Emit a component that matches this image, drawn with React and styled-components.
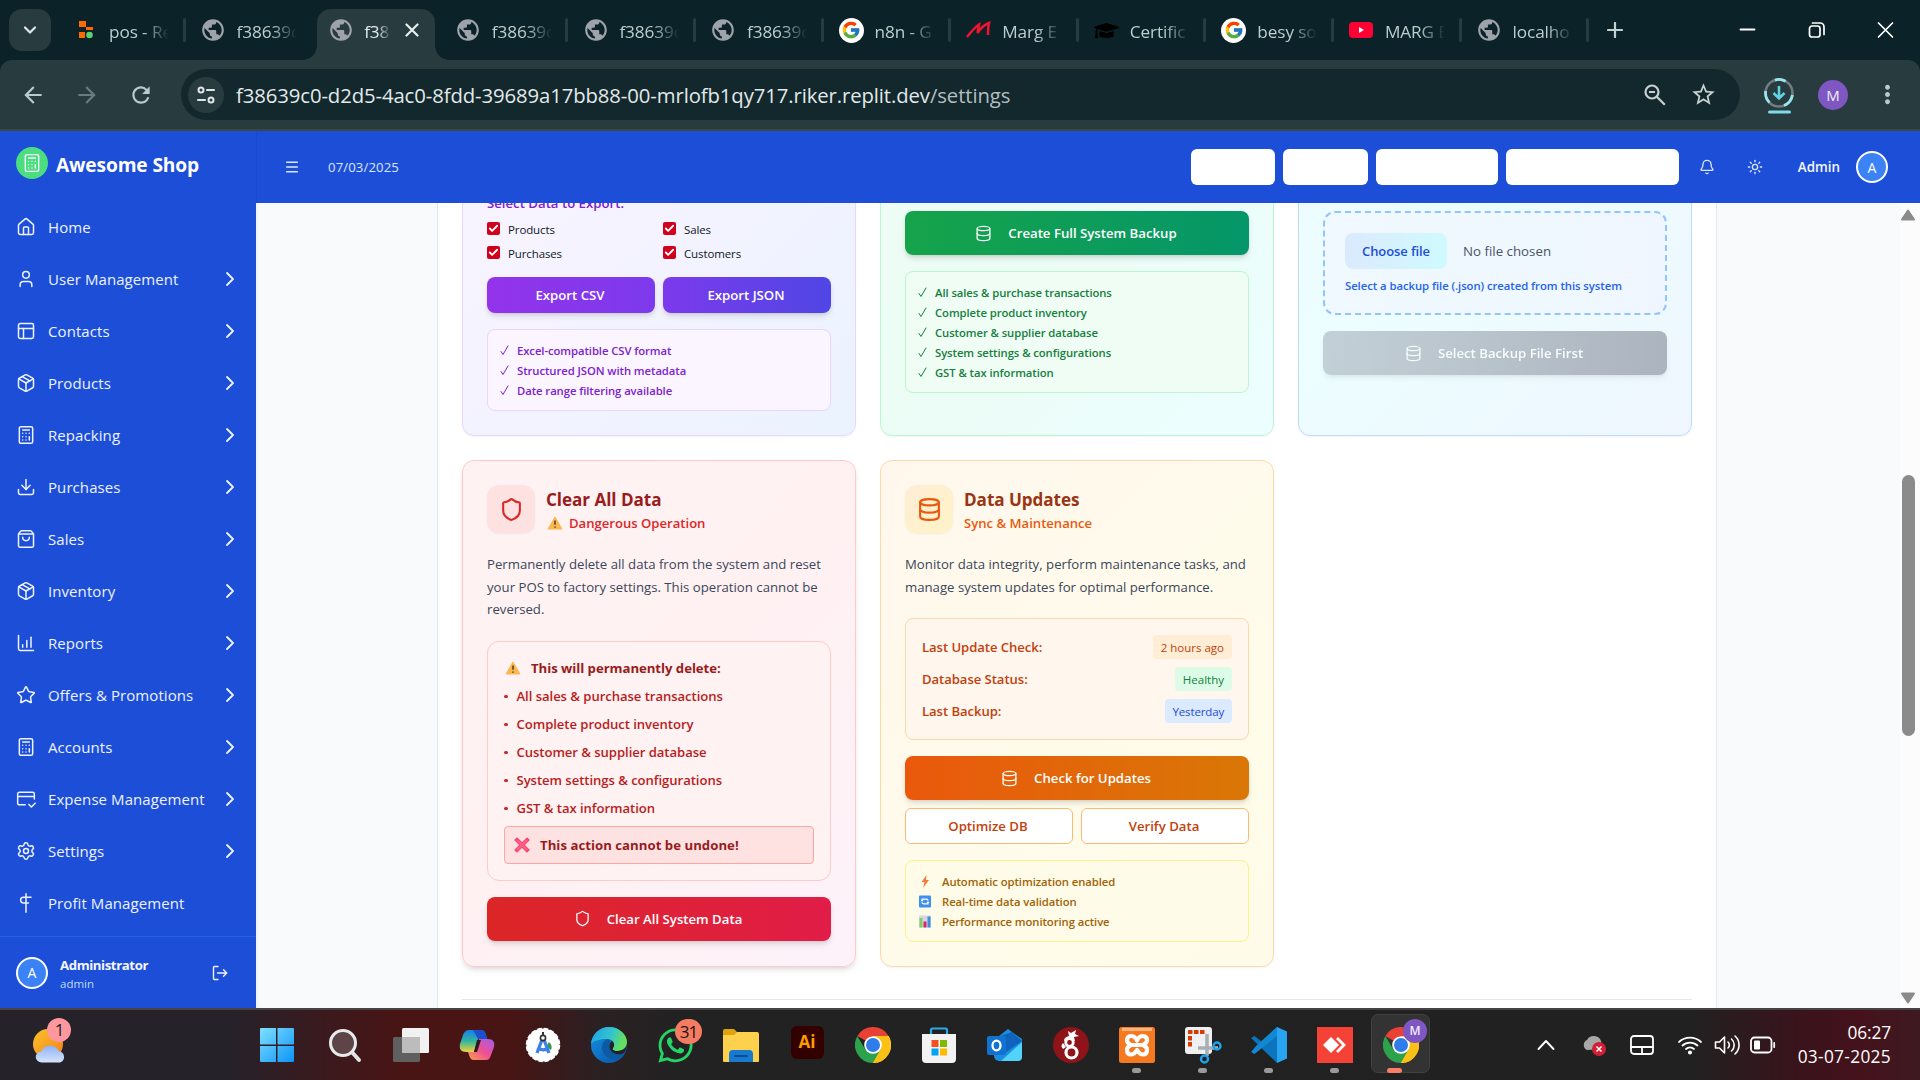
import React from "react";
import styled, { createGlobalStyle, css } from "styled-components";
import {
  House, User, PanelsTopLeft, Package, Calculator, Download, ShoppingBag,
  ChartColumnIncreasing, Star, Settings, ChevronRight, Bell, Sun, Menu,
  Shield, Database, Check,
} from "lucide-react";
import { FcGoogle } from "react-icons/fc";
import { FaGraduationCap, FaWhatsapp } from "react-icons/fa";
import { MdPublic, MdArrowBack, MdArrowForward, MdRefresh, MdStarBorder, MdMoreVert } from "react-icons/md";

const Global = createGlobalStyle`
  *, *::before, *::after { box-sizing: border-box; }
  body { margin: 0; background: #0b2328; }
  body, button { font-family: "Open Sans", "Noto Sans", sans-serif; }
  svg { display: block; flex: none; }
`;

const Screen = styled.div`
  width: 1920px; height: 1080px; overflow: hidden;
  display: flex; flex-direction: column;
`;

/* ---------- browser chrome ---------- */
const TabStrip = styled.div`
  height: 60px; flex: none; background: #0b2328;
  display: flex; align-items: center; padding-left: 9px;
`;
const TabSearch = styled.div`
  width: 42px; height: 42px; border-radius: 13px; background: #283c40; color: #dfe7e8;
  display: flex; align-items: center; justify-content: center; margin-right: 6px;
`;
const Tab = styled.div`
  width: 127.6px; height: 51px; align-self: flex-end; flex: none; position: relative;
  display: flex; align-items: center; padding: 0 0 9px 17.5px; gap: 12.5px;
  ${(p) => p.$sep && css`
    &::after { content: ""; position: absolute; right: -1px; top: 9px; width: 3px; height: 24px; border-radius: 2px; background: #283c40; }
  `}
  ${(p) => p.$active && css`
    width: 118px; margin: 0 4.6px 0 5px; padding-left: 12.5px; background: #283c40; border-radius: 14px 14px 0 0;
    &::before, &::after { content: ""; position: absolute; bottom: 0; width: 14px; height: 14px; }
    &::before { left: -14px; background: radial-gradient(circle at 0 0, transparent 13.5px, #283c40 14px); }
    &::after { right: -14px; background: radial-gradient(circle at 100% 0, transparent 13.5px, #283c40 14px); }
  `}
`;
const TabIcon = styled.div`
  width: 22px; height: 26px; flex: none; display: flex; align-items: center; justify-content: center;
`;
const TabText = styled.div`
  width: ${(p) => p.$w || 68}px; flex: none; overflow: hidden; white-space: nowrap;
  font-size: 17.2px; line-height: 26px; color: ${(p) => (p.$w ? "#e3ebec" : "#bccdcf")};
  letter-spacing: -0.1px; padding-top: 3px;
  mask-image: linear-gradient(90deg, #000 ${(p) => (p.$w ? 14 : 34)}px, transparent ${(p) => (p.$w ? 27 : 60)}px);
`;
const NewTab = styled.div` width: 53px; display: flex; justify-content: center; color: #c3d0d2; `;
const WindowButtons = styled.div`
  margin-left: auto; display: flex; color: #fff;
  svg { width: 69px; height: 20px; }
`;

const ToolbarWrap = styled.div` height: 71px; flex: none; background: #0b2328; `;
const Toolbar = styled.div`
  height: 71px; background: #283c40; border-radius: 12px 12px 0 0; box-shadow: inset 0 -2px 0 #3c4644;
  display: flex; align-items: center; padding: 0 0 2px 6px; color: #b5cdd0;
`;
const NavButton = styled.div`
  width: 54px; flex: none; display: flex; justify-content: center; opacity: ${(p) => (p.$dim ? 0.45 : 1)};
`;
const UrlBar = styled.div`
  width: 1559px; flex: none; height: 51px; margin-left: 13px; border-radius: 26px; background: #12282c;
  display: flex; align-items: center; padding: 0 12px 0 7px; color: #c7cfd0;
`;
const SiteChip = styled.div`
  width: 36px; height: 36px; border-radius: 50%; background: #283c40;
  display: flex; align-items: center; justify-content: center; margin-right: 12px;
`;
const Url = styled.div`
  font-size: 20.3px; letter-spacing: -0.09px; color: #e3e9ea; white-space: nowrap; margin-right: auto;
  span { color: #b4bfc1; }
`;
const UrlAction = styled.div` width: 49px; display: flex; justify-content: center; `;
const DownloadBadge = styled.div` margin: 5px 0 0 23px; flex: none; `;
const ProfileDot = styled.div`
  width: 30px; height: 30px; flex: none; border-radius: 50%; background: #7e57c2; color: #f3ecff;
  font-size: 15px; display: flex; align-items: center; justify-content: center; margin: 0 25px 0 23px;
`;

/* ---------- app shell ---------- */
const Page = styled.div` height: 877px; flex: none; display: flex; `;
const Sidebar = styled.aside`
  width: 256px; flex: none; background: #1d4ed8; color: #eef3ff;
  display: flex; flex-direction: column;
`;
const Brand = styled.div`
  height: 70px; display: flex; align-items: center; gap: 8px; padding: 0 0 6px 16px;
  font-size: 19.2px; font-weight: 700; color: #fff; letter-spacing: -0.15px;
  span { padding-top: 2px; }
`;
const BrandMark = styled.div`
  width: 32px; height: 32px; border-radius: 50%; background: #4ade80; color: #fff;
  display: flex; align-items: center; justify-content: center;
`;
const Nav = styled.nav` flex: 1; display: flex; flex-direction: column; `;
const NavItem = styled.div`
  height: 52px; display: flex; align-items: center; gap: 12px; padding: 0 14px 0 16px;
  font-size: 15px; color: #edf3ff; letter-spacing: 0.08px;
  span { flex: 1; white-space: nowrap; }
`;
const Account = styled.div`
  height: 72px; border-top: 1px solid #2563eb; display: flex; align-items: center; padding: 0 28px 0 16px;
`;
const Avatar = styled.div`
  width: 32px; height: 32px; border-radius: 50%; border: 2px solid #fff; background: #3b82f6; color: #fff;
  font-size: 14px; font-weight: 500; display: flex; align-items: center; justify-content: center;
`;
const AccountText = styled.div`
  margin-left: 12px; padding-top: 3px; flex: 1; font-size: 11.5px; line-height: 18px; color: #bfdbfe;
  strong { display: block; font-size: 13.2px; line-height: 19px; font-weight: 700; color: #f3f7ff; letter-spacing: -0.4px; }
`;

const Main = styled.main` flex: 1; min-width: 0; display: flex; flex-direction: column; `;
const Header = styled.header`
  height: 72px; flex: none; background: #1d4ed8; color: #dbe7ff;
  display: flex; align-items: center; padding: 0 32px 0 28px; box-shadow: inset 1px 0 0 #1b49cb;
`;
const HeaderDate = styled.div` font-size: 13.2px; margin-left: 28px; margin-right: auto; letter-spacing: 0.1px; `;
const HeaderBox = styled.div`
  width: ${(p) => p.$w}px; height: 36px; border-radius: 6px; background: #fff; margin-right: 8px;
`;
const HeaderIcon = styled.div` width: 48px; display: flex; justify-content: center; margin-left: ${(p) => p.$pull || 0}px; `;
const HeaderName = styled.div` font-size: 13.4px; font-weight: 600; margin: 0 16px 0 19px; color: #f3f7ff; `;

const Body = styled.div` height: 805px; display: flex; overflow: hidden; `;
const Scroller = styled.div` flex: 1; height: 805px; overflow: hidden; background: #f9fafb; box-shadow: inset 3px 0 4px -2px rgba(0,0,0,.06); `;
const Panel = styled.section`
  width: 1280px; height: 1120px; margin: -300px 0 0 181px; padding: 0 24px; background: #fff;
  border: solid #e2e8f0; border-width: 0 1px;
`;
const Cards = styled.div`
  display: grid; grid-template-columns: repeat(3, 1fr); grid-template-rows: 533px 507px; gap: 24px;
`;
const Divider = styled.div` height: 1px; background: #e2e8f0; margin-top: 32px; `;

const tones = {
  purple: { bg: "linear-gradient(135deg,#faf5ff,#f5f3ff 50%,#eaf3ff)", line: "#e9d5ff" },
  green: { bg: "linear-gradient(135deg,#f0fdf4,#ecfdf5 50%,#ecfeff)", line: "#bbf7d0" },
  blue: { bg: "linear-gradient(135deg,#f0f7ff,#ecfeff 50%,#eff6ff)", line: "#bfdbfe" },
  red: { bg: "linear-gradient(135deg,#fef2f2,#fff1f2 50%,#fdf2fa)", line: "#fecaca" },
  orange: { bg: "linear-gradient(135deg,#fff7ed,#fffbeb 50%,#fefce8)", line: "#fed7aa" },
};
const Card = styled.article`
  display: flex; flex-direction: column; justify-content: ${(p) => (p.$end ? "flex-end" : "flex-start")};
  padding: 24px 24px ${(p) => p.$end || 24}px; border-radius: 12px;
  border: 1px solid ${(p) => tones[p.$tone].line}; background: ${(p) => tones[p.$tone].bg};
  box-shadow: ${(p) => (p.$raised ? "0 4px 6px -1px rgba(0,0,0,.1), 0 2px 4px -2px rgba(0,0,0,.1)" : "0 1px 2px rgba(0,0,0,.05)")};
`;
const CardHead = styled.div` display: flex; gap: 11px; height: 48px; flex: none; `;
const CardIcon = styled.div`
  width: 48px; height: 48px; border-radius: 12px; background: ${(p) => p.$bg}; color: ${(p) => p.$fg};
  display: flex; align-items: center; justify-content: center; box-shadow: 0 1px 2px rgba(0,0,0,.05);
`;
const CardTitle = styled.h3`
  margin: 0; padding-top: 1px; font-size: 17.1px; line-height: 28px; font-weight: 700; color: ${(p) => p.$fg}; letter-spacing: -0.05px;
`;
const CardSub = styled.div`
  display: flex; align-items: center; gap: 6px; margin-top: -1px; padding-left: ${(p) => p.$in || 0}px;
  font-size: 13.1px; line-height: 20px; font-weight: 600; color: ${(p) => p.$fg};
`;
const Desc = styled.p`
  margin: 20px 0; font-size: 13.2px; line-height: 22.6px; color: #3b475a; white-space: pre-line; flex: none;
`;
const ExportLabel = styled.div` font-size: 13.2px; line-height: 20px; font-weight: 600; color: #7e22ce; margin-bottom: 8px; `;
const CheckGrid = styled.div` display: grid; grid-template-columns: 1fr 1fr; gap: 8px; margin-bottom: 16px; `;
const CheckRow = styled.div`
  height: 16px; display: flex; align-items: center; gap: 8px; font-size: 11.5px; color: #111827; letter-spacing: -0.12px;
  span { padding-top: 1px; }
`;
const CheckBox = styled.div`
  width: 13px; height: 13px; border-radius: 2px; background: #d0021b; color: #fff; margin-bottom: 1px;
  display: flex; align-items: center; justify-content: center;
`;
const ButtonRow = styled.div` display: grid; grid-template-columns: 1fr 1fr; gap: 8px; margin: ${(p) => p.$m || 0}; flex: none; `;
const Button = styled.button`
  height: ${(p) => (p.$small ? 36 : 44)}px; flex: none; border: ${(p) => (p.$outline ? "1px solid #fdba74" : "0")};
  border-radius: ${(p) => (p.$outline ? 6 : 8)}px;
  padding: 0 2px 0 0; display: flex; align-items: center; justify-content: center; gap: 16px;
  font-size: 13.2px; font-weight: 600; color: ${(p) => (p.$outline ? "#c2410c" : "#fff")};
  background: ${(p) => p.$bg || "#fff"}; opacity: ${(p) => (p.$muted ? 0.5 : 1)};
  box-shadow: ${(p) => (p.$outline ? "none" : "0 4px 6px -1px rgba(0,0,0,.12), 0 2px 4px -2px rgba(0,0,0,.12)")};
`;
const Features = styled.div`
  margin-top: 16px; padding: 12px; border: 1px solid ${(p) => p.$line}; border-radius: 8px; background: ${(p) => p.$bg};
  display: flex; flex-direction: column; gap: 4px; flex: none;
`;
const Feature = styled.div`
  height: 16px; display: flex; align-items: center; gap: ${(p) => p.$gap || 8}px; white-space: nowrap;
  font-size: 11.3px; font-weight: 600; color: ${(p) => p.$fg}; letter-spacing: -0.08px;
`;
const DropZone = styled.div`
  height: 104px; flex: none; border: 2px dashed #93c5fd; border-radius: 12px; padding: 20px; margin-bottom: 16px;
  background: linear-gradient(90deg, #eff9ff, #eff6ff);
`;
const FileRow = styled.div` display: flex; align-items: center; gap: 16px; font-size: 13.3px; color: #4b5563; `;
const FileButton = styled.div`
  width: 102px; height: 36px; border-radius: 8px; background: linear-gradient(90deg, #dbeafe, #cffafe);
  color: #1d4ed8; font-size: 13px; font-weight: 600; display: flex; align-items: center; justify-content: center; letter-spacing: -0.1px;
`;
const FileHint = styled.div`
  margin-top: 8px; font-size: 11.3px; line-height: 18px; font-weight: 600; color: #2563eb; white-space: nowrap; letter-spacing: -0.05px;
`;

const DeleteBox = styled.div`
  padding: 16px; border: 1px solid #fecaca; border-radius: 12px; background: #fef2f2; margin-bottom: 16px;
  display: flex; flex-direction: column; gap: 8px; flex: none;
`;
const DeleteTitle = styled.div`
  height: 20px; display: flex; align-items: center; gap: 10px; padding-left: 1px;
  font-size: 13.2px; font-weight: 700; color: #991b1b; letter-spacing: -0.05px;
`;
const DeleteItem = styled.div`
  height: 20px; display: flex; align-items: center; gap: 9px; font-size: 13.1px; font-weight: 600; color: #b91c1c; letter-spacing: -0.05px;
  &::before { content: ""; width: 3.5px; height: 3.5px; border-radius: 50%; background: #c62828; margin: 1px 0 0 0; }
`;
const DangerNote = styled.div`
  height: 38px; border: 1px solid #fca5a5; border-radius: 4px; background: #fee2e2; padding-left: 9px;
  display: flex; align-items: center; gap: 10px; font-size: 13.2px; font-weight: 700; color: #991b1b; letter-spacing: 0.02px;
`;
const StatusBox = styled.div`
  padding: 16px; border: 1px solid #fed7aa; border-radius: 8px; background: #fff6ee; margin-bottom: 16px;
  display: flex; flex-direction: column; gap: 8px; flex: none;
`;
const StatusRow = styled.div`
  height: 24px; display: flex; align-items: center; justify-content: space-between;
  font-size: 13.1px; font-weight: 600; color: #c2410c; letter-spacing: -0.05px;
`;
const Pill = styled.span`
  height: 24px; padding: 0 8px; border-radius: 4px; background: ${(p) => p.$bg}; color: ${(p) => p.$fg};
  font-size: 11.5px; font-weight: 400; line-height: 25px; letter-spacing: ${(p) => p.$ls || 0}px;
`;

const ScrollTrack = styled.div`
  width: 20px; background: #fcfcfc; display: flex; flex-direction: column; align-items: center; padding: 6px 4px 4px 0;
`;
const ScrollThumb = styled.div` width: 13px; height: 261px; border-radius: 7px; background: #8b8b8b; margin: 254px 0 auto; `;

/* ---------- taskbar ---------- */
const Taskbar = styled.footer`
  height: 72px; flex: none; display: flex; border-top: 2px solid #474344;
  background: linear-gradient(90deg,#25222a 0,#25222a 230px,#3a1a1e 320px,#481414 400px,#481414 510px,#2a2022 600px,#222 680px,#212121 1690px,#3a131b 1800px,#45121c 1860px,#3e1a20 1920px);
`;
const Weather = styled.div` width: 244px; flex: none; padding: 10px 0 0 30px; `;
const WeatherIcon = styled.div` width: 44px; height: 44px; position: relative; padding: 2px 0 0 3px; `;
const Slot = styled.div`
  width: 66px; height: 70px; flex: none; position: relative; display: flex; align-items: center; justify-content: center;
  &:nth-child(2) { margin-right: 2px; }
  ${(p) => p.$dot && css`
    &::after { content: ""; position: absolute; bottom: 7px; left: 28px; width: 9px; height: 5px; border-radius: 3px; background: #9a9a9a; }
  `}
  ${(p) => p.$active && css`
    &::before { content: ""; position: absolute; inset: 4px 4px 7px 3px; border-radius: 7px; background: #333; border: 1px solid #414141; }
    &::after { content: ""; position: absolute; bottom: 7px; left: 19px; width: 15px; height: 5px; border-radius: 3px; background: #f98066; }
  `}
  svg { position: relative; }
`;
const Count = styled.span`
  position: absolute; z-index: 1; top: ${(p) => p.$top}px; right: ${(p) => p.$right}px; width: ${(p) => p.$w}px; height: ${(p) => p.$h}px; border-radius: 13px;
  background: ${(p) => p.$bg}; color: ${(p) => p.$fg}; font-size: 17px; line-height: ${(p) => p.$h}px; text-align: center; letter-spacing: -1px;
`;
const Tray = styled.div` margin-left: auto; display: flex; align-items: center; color: #fff; `;
const TrayCell = styled.div` width: ${(p) => p.$w}px; display: flex; justify-content: center; `;
const Clock = styled.div`
  width: 105px; margin-right: 29px; text-align: right; font-size: 17.3px; line-height: 23.5px; color: #fff; padding-bottom: 1px;
  letter-spacing: -0.1px;
  span { display: block; letter-spacing: 0.32px; white-space: nowrap; }
`;

/* ---------- drawings ---------- */
const stroke = { fill: "none", stroke: "currentColor", strokeLinecap: "round", strokeLinejoin: "round" };

const CardCheckIcon = () => (
  <svg width="20" height="20" viewBox="0 0 24 24" {...stroke} strokeWidth="1.8">
    <path d="M11 19H4a2 2 0 0 1-2-2V6a2 2 0 0 1 2-2h16a2 2 0 0 1 2 2v6M2 9h20M15.500 18.500l3 3 4.500-4.500" />
  </svg>
);
const ProfitIcon = () => (
  <svg width="20" height="20" viewBox="0 0 24 24" {...stroke} strokeWidth="1.8">
    <path d="M12 1v22M18 5H9a3.500 3.500 0 0 0 0 7h6" />
  </svg>
);
const LogoutIcon = () => (
  <svg width="16" height="16" viewBox="0 0 16 16" {...stroke} strokeWidth="1.400" strokeLinejoin="miter">
    <path d="M6 1.500H2.500a1 1 0 0 0-1 1v11a1 1 0 0 0 1 1H6M5.500 8H14.500M11.500 4.800L14.700 8l-3.200 3.200" />
  </svg>
);
const WarnIcon = () => (
  <svg width="16" height="14" viewBox="0 0 16 14">
    <path d="M8 1L15 13H1z" fill="#fcb84e" stroke="#fcb84e" strokeLinejoin="round" />
    <path d="M8 4.500v4.300M8 10.500v1.200" stroke="#5d4b3a" strokeWidth="1.700" />
  </svg>
);
const CrossIcon = () => (
  <svg width="16" height="16" viewBox="0 0 16 16">
    <path d="M3 3l10 10M13 3L3 13" stroke="#f8436c" strokeWidth="4" strokeLinecap="square" />
    <path d="M3 3l10 10M13 3L3 13" stroke="#ff6088" strokeWidth="2.400" />
  </svg>
);
const TickIcon = () => (
  <svg width="9" height="11" viewBox="0 0 9 11" {...stroke} strokeWidth="1">
    <path d="M1 6.500l2 3L8 1" />
  </svg>
);
const BoltIcon = () => (
  <svg width="14" height="13" viewBox="0 0 14 13"><path d="M8.500 0L3.500 7h3L5 13l6-8H8z" fill="#f5793b" /></svg>
);
const SyncIcon = () => (
  <svg width="14" height="13" viewBox="0 0 14 13">
    <rect x="1" y="0.500" width="12" height="12" rx="1" fill="#3b8ff0" />
    <path d="M4 6V4.200h4.500a1.500 1.500 0 0 1 1.500 1.500M10 7v1.800H5.500A1.500 1.500 0 0 1 4 7.300M2.800 5.600h2.400M8.800 7.400h2.400" fill="none" stroke="#fff" strokeWidth="1.200" />
  </svg>
);
const BarsIcon = () => (
  <svg width="14" height="13" viewBox="0 0 14 13">
    <rect x="1" y="0.500" width="12" height="12" fill="#d9d3e4" />
    <path d="M1.500 3h3v9.500h-3z" fill="#7fd15f" /><path d="M5.500 6.500h3v6h-3z" fill="#d4266f" /><path d="M9.500 1.500h3v11h-3z" fill="#3f8fd8" />
  </svg>
);
const ReplitIcon = () => (
  <svg width="16" height="20" viewBox="0 0 16 20">
    <path d="M1 1h7v6H1zM8 7h7v3H8zM1 12h6v6H1z" fill="#ff6a00" /><circle cx="11.500" cy="15" r="3.300" fill="#5fd06f" />
  </svg>
);
const MargIcon = () => (
  <svg width="26" height="20" viewBox="0 0 26 20">
    <path d="M1 17C5 12 9 7 13 4.500L11.500 13C14 9 18 5 23 3c-1 4-1 8-1 12" fill="none" stroke="#f0142f" strokeWidth="2.500" strokeLinejoin="miter" />
  </svg>
);
const YoutubeIcon = () => (
  <svg width="24" height="18" viewBox="0 0 24 18"><rect y="1" width="24" height="16" rx="4" fill="#ff0033" /><path d="M10 6l5 3-5 3z" fill="#fff" /></svg>
);
const GoogleDisc = styled.div`
  width: 25px; height: 25px; margin: 0 -1px; border-radius: 50%; background: #fff; flex: none;
  display: flex; align-items: center; justify-content: center;
`;
const GoogleIcon = () => <GoogleDisc><FcGoogle size={20} /></GoogleDisc>;
const GlobeIcon = () => <MdPublic size={26} color="#9ea2ab" />;

const ChromeIcon = () => (
  <svg width="36" height="36" viewBox="0 0 36 36">
    <path d="M18 18L2.400 9A18 18 0 0 1 33.600 9z" fill="#e94235" />
    <path d="M18 18V9h15.600A18 18 0 0 1 18 36z" fill="#fbc116" />
    <path d="M18 36A18 18 0 0 1 2.400 9l7.800 13.500 15.600 0z" fill="#2ca24c" />
    <path d="M33.600 9H18v9l7.800 4.500L18 36A18 18 0 0 0 33.600 9z" fill="#fbc116" />
    <circle cx="18" cy="18" r="8.800" fill="#fff" /><circle cx="18" cy="18" r="7" fill="#2f7de9" />
  </svg>
);
const dockIcons = {
  start: (
    <svg width="36" height="36" viewBox="0 0 36 36">
      <defs><linearGradient id="win" x1="0" y1="0" x2="1" y2="1"><stop offset="0" stopColor="#7fe0ff" /><stop offset="1" stopColor="#0d94f7" /></linearGradient></defs>
      <path d="M1 2a1 1 0 0 1 1-1h15v16.500H1zM18.500 1H34a1 1 0 0 1 1 1v15.500H18.500zM1 19h16v16H2a1 1 0 0 1-1-1zM18.500 19H35v15a1 1 0 0 1-1 1H18.500z" fill="url(#win)" />
    </svg>
  ),
  search: (
    <svg width="34" height="36" viewBox="0 0 34 36">
      <path d="M23 24l8 9" stroke="#dfe3e4" strokeWidth="4" strokeLinecap="round" /><circle cx="15" cy="16" r="12.500" fill="#5f4447" stroke="#e8ebeb" strokeWidth="3" />
    </svg>
  ),
  tasks: (
    <svg width="38" height="36" viewBox="0 0 38 36">
      <rect x="1" y="10" width="27" height="25" rx="1.500" fill="#5f5f5f" /><rect x="10" y="1" width="27" height="25" rx="1.500" fill="#f1f1f1" /><path d="M10 10h18v16H10z" fill="#bcbcbc" />
    </svg>
  ),
  copilot: (
    <svg width="36" height="36" viewBox="0 0 36 36">
      <defs>
        <linearGradient id="cpa" x1="0" y1="0" x2="0" y2="1"><stop offset="0" stopColor="#1b7be8" /><stop offset=".5" stopColor="#2fb6a0" /><stop offset="1" stopColor="#f3d13a" /></linearGradient>
        <linearGradient id="cpb" x1="1" y1="0" x2="0" y2="1"><stop offset="0" stopColor="#a05df0" /><stop offset=".5" stopColor="#ee4f95" /><stop offset="1" stopColor="#fba04a" /></linearGradient>
      </defs>
      <path d="M10 3h12c3 0 4 2 5 5l1 4h-9l-4 13H7c-5 0-7-3-6-8l3-9c1-3 3-5 6-5z" fill="url(#cpa)" />
      <path d="M14 3h8c3 0 4 2 5 5l1 4h-9z" fill="#1a4fd0" />
      <path d="M27 33H15c-3 0-4-2-5-5l-1-3h7l4-13h9c5 0 7 3 6 8l-3 8c-1 3-2 5-5 5z" fill="url(#cpb)" />
      <path d="M15 25l3-12h4l-4 12z" fill="#2a1a20" />
    </svg>
  ),
  studio: (
    <svg width="36" height="36" viewBox="0 0 36 36">
      <circle cx="18" cy="18" r="16.500" fill="#fff" stroke="#fff" strokeWidth="1.500" strokeDasharray="4.500 2" />
      <path d="M24 15a7 7 0 0 1 2 8l-5-3z" fill="#2d9b4b" />
      <path d="M18 10l-6 16M18 10l6 16M12.500 20.500c4 3 8 3 11 0" fill="none" stroke="#3f7fe8" strokeWidth="3.300" /><circle cx="18" cy="11" r="2.600" fill="#fff" stroke="#333" strokeWidth="1.600" /><path d="M18 5v3" stroke="#333" strokeWidth="2" />
    </svg>
  ),
  edge: (
    <svg width="36" height="36" viewBox="0 0 36 36">
      <defs>
        <linearGradient id="ea" x1="0" y1="0" x2="1" y2=".3"><stop offset="0" stopColor="#1ba1e8" /><stop offset=".6" stopColor="#34c4cf" /><stop offset="1" stopColor="#66e05b" /></linearGradient>
        <linearGradient id="eb" x1="0" y1="0" x2="1" y2="1"><stop offset="0" stopColor="#1593e6" /><stop offset="1" stopColor="#0b4f9e" /></linearGradient>
      </defs>
      <circle cx="18" cy="18" r="18" fill="url(#eb)" />
      <path d="M0 17C1 7 9 0 18 0c11 0 18 8 18 15 0 6-5 9-10 9-4 0-5-2-4-3 3-4 0-9-6-9C9 12 2 14 0 17z" fill="url(#ea)" />
      <path d="M16 12c-5 3-6 8-4 13 2 5 8 8 14 7 3 0 6-3 7-5-5 2-11 1-14-4-2-4-1-7 1-9-1-1-2-2-4-2z" fill="#0c59a4" />
      <path d="M36 17c-1 5-5 7-10 7-4 0-5-2-4-3 2-3 1-5-1-7-4 3-3 8 0 11 4 3 9 3 12 1 2-3 3-6 3-9z" fill="#272022" />
    </svg>
  ),
  whatsapp: <FaWhatsapp size={39} color="#25d366" />,
  folder: (
    <svg width="36" height="36" viewBox="0 0 36 36">
      <path d="M0 4a2 2 0 0 1 2-2h9l3 3v5H0z" fill="#e2a20c" /><path d="M0 8h11l3-3h20a2 2 0 0 1 2 2v27a1 1 0 0 1-1 1H1a1 1 0 0 1-1-1z" fill="#fdd04d" />
      <path d="M6 35V27a4 4 0 0 1 4-4h16a4 4 0 0 1 4 4v8z" fill="#1879d0" /><path d="M12 29h12" stroke="#0b4c8f" strokeWidth="2" strokeLinecap="round" />
    </svg>
  ),
  chrome: <ChromeIcon />,
  store: (
    <svg width="36" height="36" viewBox="0 0 36 36">
      <path d="M10 8V3a1.500 1.500 0 0 1 1.500-1.500h13A1.500 1.500 0 0 1 26 3v5" fill="none" stroke="#29a9ea" strokeWidth="2.200" />
      <path d="M1 7h34v25a4 4 0 0 1-4 4H5a4 4 0 0 1-4-4z" fill="#f2f2f2" />
      <path d="M10.500 13h7v7h-7z" fill="#f25022" /><path d="M19 13h7v7h-7z" fill="#7fba00" /><path d="M10.500 21.500h7v7h-7z" fill="#00a4ef" /><path d="M19 21.500h7v7h-7z" fill="#ffb900" />
    </svg>
  ),
  outlook: (
    <svg width="38" height="36" viewBox="0 0 38 36">
      <path d="M8 13L22 2l14 10v17a5 5 0 0 1-5 5H13a5 5 0 0 1-5-5z" fill="#1a8ee0" /><path d="M12 10L26 5l10 9-20 14z" fill="#0f63bd" /><path d="M36 15v15a4 4 0 0 1-4 4H15z" fill="#52d3fb" />
      <rect x="1" y="9" width="19" height="19" rx="2" fill="#1173cf" /><ellipse cx="10.500" cy="18.500" rx="4" ry="4.800" fill="none" stroke="#fff" strokeWidth="2.300" />
    </svg>
  ),
  dragon: (
    <svg width="36" height="36" viewBox="0 0 36 36">
      <circle cx="18" cy="18" r="18" fill="#8f1419" />
      <circle cx="16.500" cy="15.500" r="3.800" fill="none" stroke="#fff" strokeWidth="2.800" /><circle cx="18.500" cy="25.500" r="5.500" fill="none" stroke="#fff" strokeWidth="3.200" />
      <path d="M11 14c0-3 2-4 5-5l-1-5 3 2 5-3-1 4 4 2-5 1 1 4-3-1-4 0zM10 22c-2-2-2-4 0-6l3 4z" fill="#fff" />
    </svg>
  ),
  xampp: (
    <svg width="36" height="36" viewBox="0 0 36 36">
      <rect width="36" height="36" rx="2.500" fill="#f57a1f" /><path d="M3 1h30v3H3z" fill="#ffb37a" />
      <path d="M12 9c-3 0-4 2-4 4.500S10 17 12 18c-2 1-4 2-4 4.500S9 27.500 12 27.500s4.500-2 6-4.500c1.500 2.500 3 4.500 6 4.500s4-2.500 4-5-2-3.500-4-4.500c2-1 4-2 4-4.500S27 9 24 9s-4.500 1-6 4.500C16.500 10 15 9 12 9zM13.500 18h9" fill="none" stroke="#fff" strokeWidth="4.200" strokeLinejoin="round" />
    </svg>
  ),
  snip: (
    <svg width="38" height="38" viewBox="0 0 38 38">
      <rect x="1" y="1" width="27" height="27" rx="3" fill="#eef0f2" />
      <path d="M4 6h17" stroke="#d83b01" strokeWidth="4" strokeDasharray="4.500 1.500" /><path d="M6 10v11" stroke="#d83b01" strokeWidth="4" strokeDasharray="4.500 1.500" />
      <path d="M23 8v22M14 22h20" stroke="#a9afb5" strokeWidth="3.500" /><circle cx="20.500" cy="33" r="3.500" fill="none" stroke="#1fa0e8" strokeWidth="2.500" /><circle cx="33" cy="20" r="3.500" fill="none" stroke="#1fa0e8" strokeWidth="2.500" />
    </svg>
  ),
  vscode: (
    <svg width="36" height="36" viewBox="0 0 36 36">
      <path d="M26 0L10.500 14.500 3.500 9 0 11l26 25z" fill="#0b74bd" /><path d="M0 25l3.500 2L26 9V0L5 19z" fill="#1287d2" /><path d="M26 0l10 4.500v27L26 36z" fill="#28a4f0" />
    </svg>
  ),
  anydesk: (
    <svg width="36" height="36" viewBox="0 0 36 36"><rect width="36" height="36" fill="#f44336" /><path d="M14 10l8 8-8 8-8-8z" fill="#fff" /><path d="M20 11l7 7-7 7" fill="none" stroke="#fff" strokeWidth="2.800" /></svg>
  ),
};

/* ---------- data ---------- */
const tabs = [
  { icon: <ReplitIcon />, text: "pos - Re", sep: true },
  { icon: <GlobeIcon />, text: "f38639c" },
  { icon: <GlobeIcon />, text: "f38", active: true },
  { icon: <GlobeIcon />, text: "f38639c", sep: true },
  { icon: <GlobeIcon />, text: "f38639c", sep: true },
  { icon: <GlobeIcon />, text: "f38639c", sep: true },
  { icon: <GoogleIcon />, text: "n8n - G", sep: true },
  { icon: <MargIcon />, text: "Marg E", sep: true },
  { icon: <FaGraduationCap size={25} color="#000" />, text: "Certific", sep: true },
  { icon: <GoogleIcon />, text: "besy so", sep: true },
  { icon: <YoutubeIcon />, text: "MARG E", sep: true },
  { icon: <GlobeIcon />, text: "localho", sep: true },
];
const nav = [
  [House, "Home"], [User, "User Management", 1], [PanelsTopLeft, "Contacts", 1], [Package, "Products", 1],
  [Calculator, "Repacking", 1], [Download, "Purchases", 1], [ShoppingBag, "Sales", 1], [Package, "Inventory", 1],
  [ChartColumnIncreasing, "Reports", 1], [Star, "Offers & Promotions", 1], [Calculator, "Accounts", 1],
  [CardCheckIcon, "Expense Management", 1], [Settings, "Settings", 1], [ProfitIcon, "Profit Management"],
];
const contents = [
  "All sales & purchase transactions", "Complete product inventory", "Customer & supplier database",
  "System settings & configurations", "GST & tax information",
];
const dock = [
  ["start"], ["search"], ["tasks"], ["copilot"], ["studio"], ["edge"], ["whatsapp"], ["folder"], ["ai"], ["chrome"], ["store"],
  ["outlook"], ["dragon"], ["xampp", 1], ["snip", 1], ["vscode", 1], ["anydesk", 1],
];
const AiTile = styled.div`
  width: 33px; height: 33px; margin-bottom: 5px; border-radius: 6px; background: #330000; color: #ff9a00;
  font-size: 17px; font-weight: 700; line-height: 31px; text-align: center;
`;
const MiniProfile = styled.span`
  position: absolute; z-index: 1; top: 9px; right: 7px; width: 24px; height: 24px; border-radius: 50%;
  background: #7e57c2; color: #f3ecff; font-size: 12px; font-weight: 600; line-height: 24px; text-align: center;
`;

export default function App() {
  return (
    <Screen>
      <Global />
      <TabStrip>
        <TabSearch>
          <svg width="16" height="16" viewBox="0 0 16 16" {...stroke} strokeWidth="2.200"><path d="M3 5.500l5 5 5-5" /></svg>
        </TabSearch>
        {tabs.map((t, i) => (
          <Tab key={i} $sep={t.sep} $active={t.active}>
            <TabIcon>{t.icon}</TabIcon>
            <TabText $w={t.active ? 28 : 0}>{t.text}</TabText>
            {t.active && (
              <svg width="14" height="14" viewBox="0 0 14 14" {...stroke} strokeWidth="2.200" color="#e8eeee"><path d="M1.500 1.500l11 11M12.500 1.500l-11 11" /></svg>
            )}
          </Tab>
        ))}
        <NewTab><svg width="16" height="16" viewBox="0 0 16 16" {...stroke} strokeWidth="2.200"><path d="M8 1v14M1 8h14" /></svg></NewTab>
        <WindowButtons>
          <svg viewBox="0 0 69 20" {...stroke} strokeWidth="1.800"><path d="M27.500 9.500h14" /></svg>
          <svg viewBox="0 0 69 20" {...stroke} strokeWidth="1.700"><rect x="27.500" y="6" width="10.500" height="11" rx="2.500" /><path d="M30.500 3h7.500a4 4 0 0 1 4 4v7.500" /></svg>
          <svg viewBox="0 0 69 20" {...stroke} strokeWidth="1.700"><path d="M27.500 3l14 14M41.500 3l-14 14" /></svg>
        </WindowButtons>
      </TabStrip>
      <ToolbarWrap>
        <Toolbar>
          <NavButton><MdArrowBack size={26} /></NavButton>
          <NavButton $dim><MdArrowForward size={26} /></NavButton>
          <NavButton><MdRefresh size={26} /></NavButton>
          <UrlBar>
            <SiteChip>
              <svg width="20" height="20" viewBox="0 0 20 20" {...stroke} strokeWidth="2" color="#dfe6e7"><circle cx="5" cy="5" r="2.500" /><path d="M11 5h7" /><circle cx="15" cy="15" r="2.500" /><path d="M2 15h7" /></svg>
            </SiteChip>
            <Url>f38639c0-d2d5-4ac0-8fdd-39689a17bb88-00-mrlofb1qy717.riker.replit.dev<span>/settings</span></Url>
            <UrlAction>
              <svg width="24" height="24" viewBox="0 0 24 24" {...stroke} strokeLinecap="butt" strokeWidth="2.200"><circle cx="9" cy="9" r="6.500" /><path d="M13.800 13.800l8 8M6 9h6" /></svg>
            </UrlAction>
            <UrlAction><MdStarBorder size={27} /></UrlAction>
          </UrlBar>
          <DownloadBadge>
            <svg width="32" height="42" viewBox="0 0 32 42" fill="none" stroke="#9ae6ef">
              <circle cx="16" cy="17" r="13.500" stroke="#6f7d80" strokeWidth="2.500" />
              <path d="M12 4.100A13.500 13.500 0 0 1 22.500 5.200M29.400 19A13.500 13.500 0 0 1 21 29.500M6.500 26.500A13.500 13.500 0 0 1 2.700 15" strokeWidth="2.800" />
              <path d="M16 10v12M10.500 17l5.500 5.500L21.500 17" stroke="#5fd3e0" strokeWidth="2.600" /><path d="M6.500 36h20" stroke="#7fdce6" strokeWidth="3" strokeLinecap="round" />
            </svg>
          </DownloadBadge>
          <ProfileDot>M</ProfileDot>
          <MdMoreVert size={29} />
        </Toolbar>
      </ToolbarWrap>

      <Page>
        <Sidebar>
          <Brand><BrandMark><Calculator size={20} strokeWidth={1.600} /></BrandMark><span>Awesome Shop</span></Brand>
          <Nav>
            {nav.map(([Icon, label, more]) => (
              <NavItem key={label}>
                <Icon size={20} strokeWidth={1.800} />
                <span>{label}</span>
                {more && <ChevronRight size={24} strokeWidth={1.800} />}
              </NavItem>
            ))}
          </Nav>
          <Account>
            <Avatar>A</Avatar>
            <AccountText><strong>Administrator</strong>admin</AccountText>
            <LogoutIcon />
          </Account>
        </Sidebar>
        <Main>
          <Header>
            <Menu size={16} strokeWidth={2.200} />
            <HeaderDate>07/03/2025</HeaderDate>
            <HeaderBox $w={84} /><HeaderBox $w={85} /><HeaderBox $w={122} /><HeaderBox $w={173} />
            <HeaderIcon $pull={-4}><Bell size={16} strokeWidth={2} /></HeaderIcon>
            <HeaderIcon><Sun size={16} strokeWidth={2} /></HeaderIcon>
            <HeaderName>Admin</HeaderName>
            <Avatar>A</Avatar>
          </Header>
          <Body>
            <Scroller>
              <Panel>
                <Cards>
                  <Card $tone="purple" $end={24}>
                    <ExportLabel>Select Data to Export:</ExportLabel>
                    <CheckGrid>
                      {["Products", "Sales", "Purchases", "Customers"].map((n) => (
                        <CheckRow key={n}><CheckBox><Check size={11} strokeWidth={4} /></CheckBox><span>{n}</span></CheckRow>
                      ))}
                    </CheckGrid>
                    <ButtonRow>
                      <Button $small $bg="linear-gradient(90deg,#9333ea,#7c3aed)">Export CSV</Button>
                      <Button $small $bg="linear-gradient(90deg,#7c3aed,#4f46e5)">Export JSON</Button>
                    </ButtonRow>
                    <Features $bg="#faf5ff" $line="#e9d5ff">
                      {["Excel-compatible CSV format", "Structured JSON with metadata", "Date range filtering available"].map((n) => (
                        <Feature key={n} $fg="#7e22ce"><TickIcon />{n}</Feature>
                      ))}
                    </Features>
                  </Card>
                  <Card $tone="green" $end={42}>
                    <Button $bg="linear-gradient(90deg,#16a34a,#059669)"><Database size={17} strokeWidth={1.800} />Create Full System Backup</Button>
                    <Features $bg="#f0fdf4" $line="#bbf7d0">
                      {contents.map((n) => <Feature key={n} $fg="#15803d"><TickIcon />{n}</Feature>)}
                    </Features>
                  </Card>
                  <Card $tone="blue" $end={60}>
                    <DropZone>
                      <FileRow><FileButton>Choose file</FileButton>No file chosen</FileRow>
                      <FileHint>Select a backup file (.json) created from this system</FileHint>
                    </DropZone>
                    <Button $muted $bg="linear-gradient(90deg,#9ca3af,#6b7280)"><Database size={17} strokeWidth={1.800} />Select Backup File First</Button>
                  </Card>
                  <Card $tone="red" $raised>
                    <CardHead>
                      <CardIcon $bg="#fee2e2" $fg="#dc2626"><Shield size={25} strokeWidth={2} /></CardIcon>
                      <div>
                        <CardTitle $fg="#991b1b">Clear All Data</CardTitle>
                        <CardSub $fg="#dc2626" $in={1}><WarnIcon />Dangerous Operation</CardSub>
                      </div>
                    </CardHead>
                    <Desc>{"Permanently delete all data from the system and reset\nyour POS to factory settings. This operation cannot be\nreversed."}</Desc>
                    <DeleteBox>
                      <DeleteTitle><WarnIcon />This will permanently delete:</DeleteTitle>
                      {contents.map((n) => <DeleteItem key={n}>{n}</DeleteItem>)}
                      <DangerNote><CrossIcon />This action cannot be undone!</DangerNote>
                    </DeleteBox>
                    <Button $bg="linear-gradient(90deg,#dc2626,#e11d48)"><Shield size={17} strokeWidth={1.800} />Clear All System Data</Button>
                  </Card>
                  <Card $tone="orange">
                    <CardHead>
                      <CardIcon $bg="linear-gradient(135deg,#ffedd5,#fef3c7)" $fg="#ea580c"><Database size={25} strokeWidth={2} /></CardIcon>
                      <div>
                        <CardTitle $fg="#9a3412">Data Updates</CardTitle>
                        <CardSub $fg="#ea580c">Sync &amp; Maintenance</CardSub>
                      </div>
                    </CardHead>
                    <Desc>{"Monitor data integrity, perform maintenance tasks, and\nmanage system updates for optimal performance."}</Desc>
                    <StatusBox>
                      <StatusRow>Last Update Check:<Pill $bg="#ffedd5" $fg="#c2410c">2 hours ago</Pill></StatusRow>
                      <StatusRow>Database Status:<Pill $bg="#dcfce7" $fg="#15803d">Healthy</Pill></StatusRow>
                      <StatusRow>Last Backup:<Pill $bg="#dbeafe" $fg="#1d4ed8" $ls={-0.15}>Yesterday</Pill></StatusRow>
                    </StatusBox>
                    <Button $bg="linear-gradient(90deg,#ea580c,#d97706)"><Database size={17} strokeWidth={1.800} />Check for Updates</Button>
                    <ButtonRow $m="8px 0 0">
                      <Button $small $outline>Optimize DB</Button>
                      <Button $small $outline>Verify Data</Button>
                    </ButtonRow>
                    <Features $bg="#fefce8" $line="#fef08a">
                      <Feature $fg="#a16207" $gap={10}><BoltIcon />Automatic optimization enabled</Feature>
                      <Feature $fg="#a16207" $gap={10}><SyncIcon />Real-time data validation</Feature>
                      <Feature $fg="#a16207" $gap={10}><BarsIcon />Performance monitoring active</Feature>
                    </Features>
                  </Card>
                </Cards>
                <Divider />
              </Panel>
            </Scroller>
            <ScrollTrack>
              <svg width="16" height="12" viewBox="0 0 16 12"><path d="M8 1.500L14 10.500H2z" fill="#8b8b8b" stroke="#8b8b8b" strokeWidth="2" strokeLinejoin="round" /></svg>
              <ScrollThumb />
              <svg width="16" height="12" viewBox="0 0 16 12"><path d="M8 10.500L14 1.500H2z" fill="#8b8b8b" stroke="#8b8b8b" strokeWidth="2" strokeLinejoin="round" /></svg>
            </ScrollTrack>
          </Body>
        </Main>
      </Page>

      <Taskbar>
        <Weather>
          <WeatherIcon>
            <svg width="36" height="42" viewBox="0 0 36 42">
              <defs>
                <linearGradient id="sun" x1="0" y1="0" x2="1" y2="1"><stop offset="0" stopColor="#fcc329" /><stop offset="1" stopColor="#f0801d" /></linearGradient>
                <linearGradient id="cloud" x1="0" y1="0" x2="0" y2="1"><stop offset="0" stopColor="#8fb2f5" /><stop offset="1" stopColor="#d5e4fb" /></linearGradient>
              </defs>
              <circle cx="15" cy="22" r="15" fill="url(#sun)" />
              <path d="M9 40.500a6 5.500 0 0 1-.5-11 9 8 0 0 1 17-.5 6.500 6 0 0 1 1.500 11.500z" fill="url(#cloud)" />
            </svg>
            <Count $bg="#ff979f" $fg="#222" $top={-2} $right={3} $w={24} $h={24}>1</Count>
          </WeatherIcon>
        </Weather>
        {dock.map(([name, dot]) => (
          <Slot key={name} $dot={dot}>
            {name === "ai" ? <AiTile>Ai</AiTile> : dockIcons[name]}
            {name === "whatsapp" && <Count $bg="#f47c62" $fg="#241412" $top={9} $right={6} $w={27} $h={25}>31</Count>}
          </Slot>
        ))}
        <Slot $active><ChromeIcon /><MiniProfile>M</MiniProfile></Slot>
        <Tray>
          <TrayCell $w={48}><svg width="18" height="12" viewBox="0 0 18 12" {...stroke} strokeWidth="1.900"><path d="M1.500 10L9 2l7.500 8" /></svg></TrayCell>
          <TrayCell $w={48}>
            <svg width="26" height="24" viewBox="0 0 26 24"><path d="M6 17a5.500 5.500 0 0 1 0-10 7.500 7 0 0 1 14 1l2 8z" fill="#a7a7a7" /><circle cx="18" cy="16" r="7" fill="#d21f35" /><path d="M15.500 13.500l5 5M20.500 13.500l-5 5" stroke="#fff" strokeWidth="1.500" /></svg>
          </TrayCell>
          <TrayCell $w={48}><svg width="24" height="20" viewBox="0 0 24 20" {...stroke} strokeWidth="1.800"><rect x="1" y="1" width="22" height="18" rx="3" /><path d="M1 12h22M12 12v7" /></svg></TrayCell>
          <TrayCell $w={48}><svg width="26" height="20" viewBox="0 0 26 20" {...stroke} strokeWidth="1.800"><path d="M2 7a16 16 0 0 1 22 0M5.500 10.500a11 11 0 0 1 15 0M9 14a6 6 0 0 1 8 0" /><circle cx="13" cy="17.500" r="1.200" fill="#fff" /></svg></TrayCell>
          <TrayCell $w={26}><svg width="26" height="22" viewBox="0 0 26 22" {...stroke} strokeWidth="1.600"><path d="M1.500 8h4l5-5v16l-5-5h-4zM14 8a4 4 0 0 1 0 6M17.500 5a8 8 0 0 1 0 12M21 2a12 12 0 0 1 0 18" /></svg></TrayCell>
          <TrayCell $w={46}><svg width="26" height="18" viewBox="0 0 26 18" {...stroke} strokeWidth="1.800"><rect x="1" y="1.500" width="20.500" height="15" rx="3.500" /><path d="M24.200 7v4" /><rect x="4" y="4.500" width="6" height="9" rx="1" fill="#fff" stroke="none" /></svg></TrayCell>
          <Clock>06:27<span>03-07-2025</span></Clock>
        </Tray>
      </Taskbar>
    </Screen>
  );
}
